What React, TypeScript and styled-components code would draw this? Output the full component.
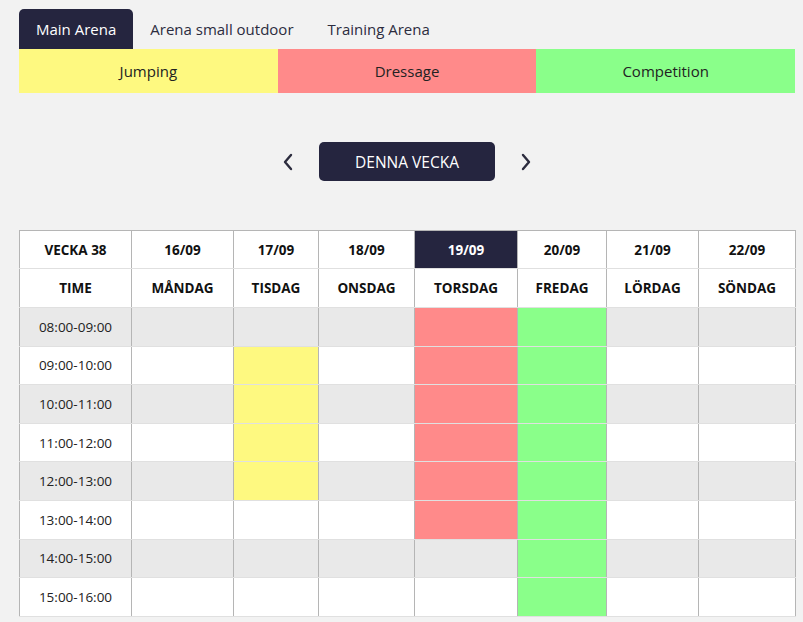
import React, { useState } from 'react'
import styled, { createGlobalStyle } from 'styled-components'

const GlobalStyle = createGlobalStyle`
    body {
        margin: 0;
        background: #f2f2f2;
        font-family: "Open Sans", "Noto Sans", sans-serif;
        color: #222;
    }
`

const DARK = '#25253f'

const Page = styled.div`
    padding: 9px 8px 0 19px;
`

const Wrapper = styled.div`
    width: 776px;
`

const Tabs = styled.div`
    display: flex;
    height: 40px;
`

const Tab = styled.button<{ $active?: boolean }>`
    border: none;
    border-radius: 5px 5px 0 0;
    padding: 0 17px;
    font-family: inherit;
    font-size: 15px;
    background: ${p => (p.$active ? DARK : 'transparent')};
    color: ${p => (p.$active ? '#fff' : '#2c2c3e')};
    cursor: pointer;
`

const Legend = styled.div`
    display: grid;
    grid-template-columns: 1fr 1fr 1fr;
    height: 44px;
`

const LegendItem = styled.div<{ $color: string }>`
    background: ${p => p.$color};
    display: flex;
    align-items: center;
    justify-content: center;
    font-size: 15px;
    color: #222;
`

const WeekNav = styled.div`
    display: flex;
    align-items: center;
    justify-content: center;
    gap: 21px;
    margin: 49px 0;
`

const Arrow = styled.button`
    border: none;
    background: none;
    padding: 4px;
    display: flex;
    cursor: pointer;
`

const WeekButton = styled.button`
    width: 176px;
    height: 39px;
    border: none;
    border-radius: 5px;
    background: ${DARK};
    color: #fff;
    font-family: inherit;
    font-size: 15.5px;
    cursor: pointer;
`

const Table = styled.table`
    width: 776px;
    border-collapse: collapse;
    table-layout: fixed;
    border: 1px solid #b5b5b5;
`

const HeadCell = styled.th<{ $today?: boolean; $tall?: boolean }>`
    height: ${p => (p.$tall ? 38 : 37)}px;
    padding: 0;
    font-size: 13.5px;
    font-weight: 700;
    text-align: center;
    border-left: 1px solid #b5b5b5;
    border-bottom: 1px solid #e0e0e0;
    background: ${p => (p.$today ? DARK : '#fff')};
    color: ${p => (p.$today ? '#fff' : '#111')};
`

const Row = styled.tr<{ $odd: boolean }>`
    background: ${p => (p.$odd ? '#e9e9e9' : '#fff')};
`

const Cell = styled.td<{ $color?: string }>`
    height: 37.6px;
    padding: 0;
    font-size: 13.5px;
    text-align: center;
    border-left: 1px solid #b5b5b5;
    border-bottom: 1px solid #e0e0e0;
    background: ${p => p.$color || 'transparent'};
    color: #222;
`

const YELLOW = '#fef980'
const RED = '#ff8a8a'
const GREEN = '#8aff8a'

const widths = [112, 102, 85, 96, 103, 89, 92, 97]
const dates = ['16/09', '17/09', '18/09', '19/09', '20/09', '21/09', '22/09']
const days = ['MÅNDAG', 'TISDAG', 'ONSDAG', 'TORSDAG', 'FREDAG', 'LÖRDAG', 'SÖNDAG']
const times = ['08:00-09:00', '09:00-10:00', '10:00-11:00', '11:00-12:00', '12:00-13:00', '13:00-14:00', '14:00-15:00', '15:00-16:00']

// booking colour per [timeIndex][dayIndex]
function bookingFor(t: number, d: number): string | undefined {
    if (d === 1 && t >= 1 && t <= 4) return YELLOW
    if (d === 3 && t <= 5) return RED
    if (d === 4) return GREEN
    return undefined
}

function Chevron({ dir }: { dir: 'left' | 'right' }) {
    return (
        <svg width="12" height="18" viewBox="0 0 12 18" fill="none">
            <path
                d={dir === 'left' ? 'M9 2 L3 9 L9 16' : 'M3 2 L9 9 L3 16'}
                stroke="#2c2c3e"
                strokeWidth="2.4"
                strokeLinecap="round"
                strokeLinejoin="round"
            />
        </svg>
    )
}

export default function App() {
    const [arena, setArena] = useState('Main Arena')
    const arenas = ['Main Arena', 'Arena small outdoor', 'Training Arena']

    return (
        <Page>
            <GlobalStyle />
            <Wrapper>
                <Tabs>
                    {arenas.map(a => (
                        <Tab key={a} $active={a === arena} onClick={() => setArena(a)}>{a}</Tab>
                    ))}
                </Tabs>
                <Legend>
                    <LegendItem $color={YELLOW}>Jumping</LegendItem>
                    <LegendItem $color={RED}>Dressage</LegendItem>
                    <LegendItem $color={GREEN}>Competition</LegendItem>
                </Legend>
                <WeekNav>
                    <Arrow><Chevron dir="left" /></Arrow>
                    <WeekButton>DENNA VECKA</WeekButton>
                    <Arrow><Chevron dir="right" /></Arrow>
                </WeekNav>
                <Table>
                    <colgroup>
                        {widths.map((w, i) => <col key={i} style={{ width: w }} />)}
                    </colgroup>
                    <thead>
                        <tr>
                            <HeadCell>VECKA 38</HeadCell>
                            {dates.map((d, i) => <HeadCell key={d} $today={i === 3}>{d}</HeadCell>)}
                        </tr>
                        <tr>
                            <HeadCell $tall>TIME</HeadCell>
                            {days.map(d => <HeadCell key={d} $tall>{d}</HeadCell>)}
                        </tr>
                    </thead>
                    <tbody>
                        {times.map((t, ti) => (
                            <Row key={t} $odd={ti % 2 === 0}>
                                <Cell>{t}</Cell>
                                {days.map((d, di) => <Cell key={d} $color={bookingFor(ti, di)} />)}
                            </Row>
                        ))}
                    </tbody>
                </Table>
            </Wrapper>
        </Page>
    )
}
